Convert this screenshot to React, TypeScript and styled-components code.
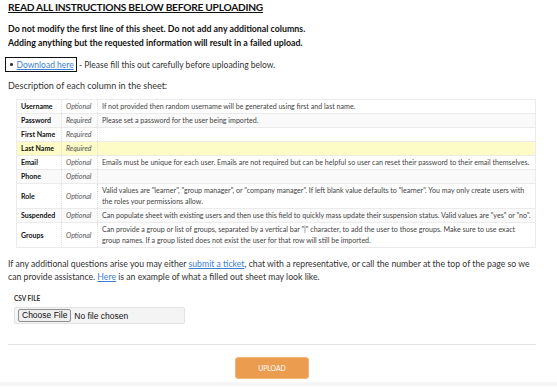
import * as React from "react";
import styled, { createGlobalStyle } from "styled-components";

const GlobalStyles = createGlobalStyle`
  *, *:before, *:after { box-sizing: border-box; }
  body {
    margin: 0;
    background: #fff;
    font-family: Lato, "Noto Sans", sans-serif;
    color: #333;
  }
`;

const Page = styled.main`
  padding: 0 21px 0 8px;
`;

const Heading = styled.h1`
  margin: 0 0 7px;
  font-size: 10.2px;
  line-height: 15px;
  font-weight: 700;
  letter-spacing: -0.25px;
  text-decoration: underline;
  text-transform: uppercase;
  color: #111;
`;

const Warning = styled.p`
  margin: 0;
  font-size: 8.8px;
  line-height: 14px;
  font-weight: 700;
  color: #111;
`;

const DownloadRow = styled.div`
  display: flex;
  align-items: center;
  margin: 7px 0 0 -3px;
  font-size: 8.5px;
  color: #333;
`;

const DownloadBox = styled.span`
  display: inline-flex;
  align-items: center;
  gap: 4px;
  height: 15px;
  padding: 0 2px 0 4px;
  border: 1.5px solid #111;
  &::before {
    content: "";
    width: 2.5px;
    height: 2.5px;
    border-radius: 50%;
    background: #333;
  }
`;

const Link = styled.a`
  color: #3d7fd0;
  text-decoration: underline;
`;

const Text = styled.p<{ $top?: number; $size?: number }>`
  margin: ${(p) => p.$top ?? 0}px 0 0;
  font-size: ${(p) => p.$size ?? 9}px;
  line-height: 13px;
  color: #333;
`;

const Table = styled.table`
  margin: 7px 0 0 8px;
  width: 520px;
  table-layout: fixed;
  border-collapse: collapse;
  border: 1px solid #ebebeb;
  font-size: 7.1px;
  line-height: 11px;
`;

const Row = styled.tr<{ $highlight?: boolean; $odd?: boolean }>`
  background: ${(p) => (p.$highlight ? "#fdfbc6" : p.$odd ? "#fafafa" : "#fff")};
  border-bottom: 1px solid #ebebeb;
`;

const Cell = styled.td`
  padding: 1px 4px;
  height: 14px;
  vertical-align: middle;
  border-right: 1px dotted #ddd;
  color: #444;
  &:last-child { border-right: none; }
`;

const NameCell = styled(Cell)`
  width: 45px;
  white-space: nowrap;
  font-size: 7px;
  font-weight: 700;
  color: #111;
`;

const FlagCell = styled(Cell)`
  width: 36px;
  white-space: nowrap;
  font-size: 7px;
  font-style: italic;
  color: #555;
`;

const Label = styled.div`
  margin: 12px 0 0 6px;
  font-size: 6.5px;
  line-height: 8px;
  font-weight: 700;
  color: #333;
  text-transform: uppercase;
`;

const FileBox = styled.div`
  display: flex;
  align-items: center;
  margin: 4px 0 0 6px;
  width: 171px;
  height: 17px;
  padding: 0 3px;
  background: #f4f4f5;
  border: 1px solid #e3e3e3;
  border-radius: 2px;
  font-family: "Liberation Sans", Arial, sans-serif;
  font-size: 8.5px;
  color: #111;
`;

const ChooseButton = styled.span`
  padding: 0 3px;
  margin-right: 3px;
  line-height: 11px;
  background: #efefef;
  border: 1px solid #8f8f8f;
  border-radius: 2px;
`;

const Divider = styled.hr`
  margin: 20px 0 0;
  border: none;
  border-top: 1px solid #e2e2e2;
`;

const Actions = styled.div`
  display: flex;
  justify-content: center;
  margin-top: 12px;
`;

const UploadButton = styled.button`
  width: 74px;
  height: 22px;
  padding: 0;
  border: 1px solid #f2b77a;
  border-radius: 3px;
  background: #eb9c4e;
  color: #fff;
  font-family: inherit;
  font-size: 6.8px;
  text-transform: uppercase;
`;

const Footer = styled.footer`
  margin-top: 3px;
  height: 4px;
  background: #f6f6f6;
`;

const columns = [
  { name: "Username", flag: "Optional", desc: "If not provided then random username will be generated using first and last name." },
  { name: "Password", flag: "Required", desc: "Please set a password for the user being imported." },
  { name: "First Name", flag: "Required", desc: "" },
  { name: "Last Name", flag: "Required", desc: "", highlight: true },
  { name: "Email", flag: "Optional", desc: "Emails must be unique for each user. Emails are not required but can be helpful so user can reset their password to their email themselves." },
  { name: "Phone", flag: "Optional", desc: "" },
  { name: "Role", flag: "Optional", desc: "Valid values are \"learner\", \"group manager\", or \"company manager\". If left blank value defaults to \"learner\". You may only create users with the roles your permissions allow." },
  { name: "Suspended", flag: "Optional", desc: "Can populate sheet with existing users and then use this field to quickly mass update their suspension status. Valid values are \"yes\" or \"no\"." },
  { name: "Groups", flag: "Optional", desc: "Can provide a group or list of groups, separated by a vertical bar \"|\" character, to add the user to those groups. Make sure to use exact group names. If a group listed does not exist the user for that row will still be imported." },
];

const App = () => {
  return (
    <>
      <GlobalStyles />
      <Page>
        <Heading>Read all instructions below before uploading</Heading>
        <Warning>Do not modify the first line of this sheet. Do not add any additional columns.</Warning>
        <Warning>Adding anything but the requested information will result in a failed upload.</Warning>
        <DownloadRow>
          <DownloadBox>
            <Link href="#">Download here</Link>
          </DownloadBox>
          &nbsp;- Please fill this out carefully before uploading below.
        </DownloadRow>
        <Text $top={7}>Description of each column in the sheet:</Text>
        <Table>
          <tbody>
            {columns.map((c, i) => (
              <Row key={c.name} $highlight={c.highlight} $odd={i % 2 === 1}>
                <NameCell>{c.name}</NameCell>
                <FlagCell>{c.flag}</FlagCell>
                <Cell>{c.desc}</Cell>
              </Row>
            ))}
          </tbody>
        </Table>
        <Text $top={9} $size={8.7}>
          {"If any additional questions arise you may either "}
          <Link href="#">submit a ticket</Link>
          {", chat with a representative, or call the number at the top of the page so we"}
          {" can provide assistance. "}
          <Link href="#">Here</Link>
          {" is an example of what a filled out sheet may look like."}
        </Text>
        <Label>CSV File</Label>
        <FileBox>
          <ChooseButton>Choose File</ChooseButton>No file chosen
        </FileBox>
        <Divider />
        <Actions>
          <UploadButton>Upload</UploadButton>
        </Actions>
      </Page>
      <Footer />
    </>
  );
};

export default App;
